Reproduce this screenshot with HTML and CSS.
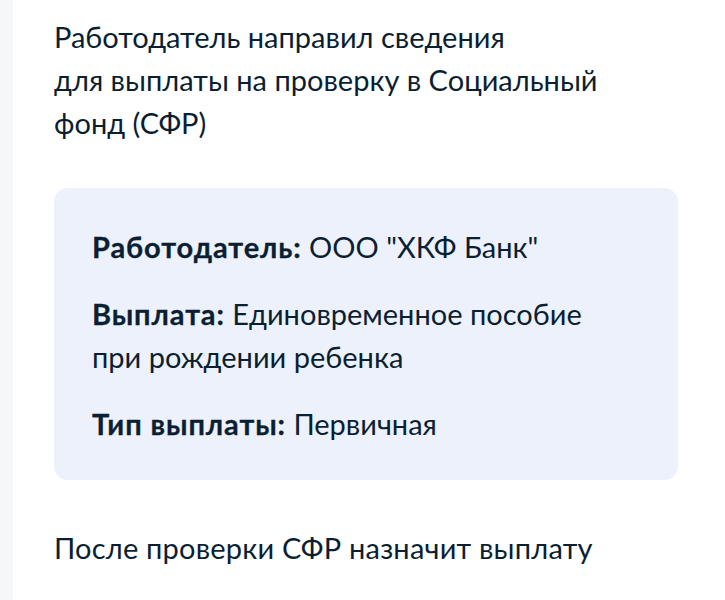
FILE: index.html
```html
<!DOCTYPE html>
<html lang="ru">
<head>
<meta charset="utf-8">
<link rel="stylesheet" href="styles.css">
</head>
<body>
<div class="page">
  <div class="strip"></div>
  <main class="content">
    <p class="lead">Работодатель направил сведения<br>для выплаты на проверку в Социальный фонд (СФР)</p>
    <section class="card">
      <p class="row"><b>Работодатель:</b> ООО "ХКФ Банк"</p>
      <p class="row"><b>Выплата:</b> Единовременное пособие<br>при рождении ребенка</p>
      <p class="row"><b>Тип выплаты:</b> Первичная</p>
    </section>
    <p class="after">После проверки СФР назначит выплату</p>
  </main>
</div>
</body>
</html>
```
FILE: styles.css
```css
html, body {
  margin: 0;
  padding: 0;
  background: #ffffff;
}
body {
  font-family: Lato, "Noto Sans", sans-serif;
  color: #0b1f33;
  font-size: 29px;
  line-height: 43px;
}
.page {
  display: flex;
  min-height: 600px;
}
.strip {
  width: 13px;
  flex: none;
  background: #f6f7f9;
}
.content {
  flex: 1;
  padding: 15px 47px 0 41px;
}
p { margin: 0; }
.lead {
  width: 560px;
}
.card {
  margin-top: 44px;
  background: #edf1fb;
  border-radius: 14px;
  padding: 37px 38px 35px;
  display: flex;
  flex-direction: column;
  gap: 24px;
}
.row b {
  font-weight: 700;
  letter-spacing: 0.9px;
  -webkit-text-stroke: 0.3px #0b1f33;
}
.after {
  margin-top: 46px;
  letter-spacing: 0.2px;
}
```
